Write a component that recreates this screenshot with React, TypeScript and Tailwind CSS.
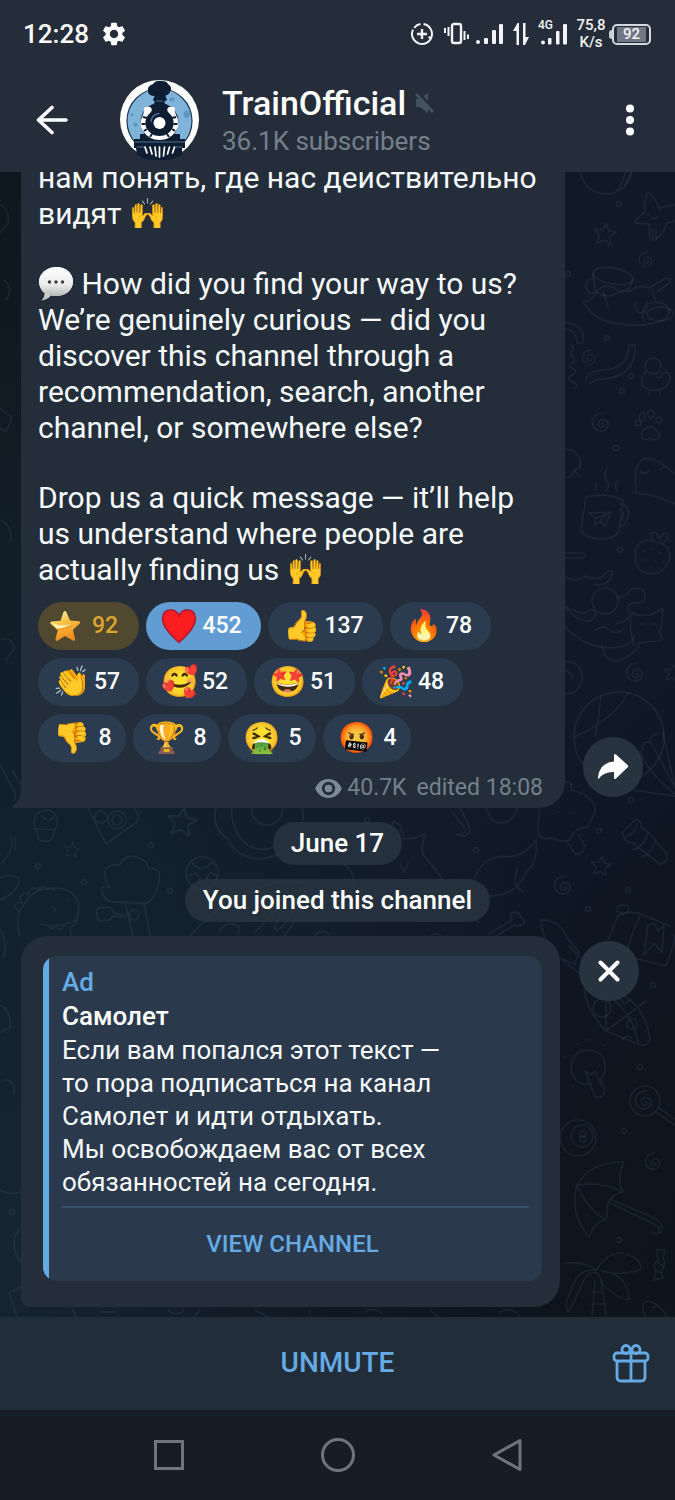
import React from "react";

/* ---------- wallpaper ---------- */

function Spiral({ x, y, s = 1 }: { x: number; y: number; s?: number }) {
  return (
    <path
      transform={`translate(${x} ${y}) scale(${s})`}
      d="M0 1c2-1 3 2 1 3-3 1-6-2-4-5 2-4 8-3 9 1 1 5-3 9-8 8-6-1-9-7-7-12 2-4 6-6 10-6"
    />
  );
}

function Star({ x, y, s = 1 }: { x: number; y: number; s?: number }) {
  return (
    <path
      transform={`translate(${x} ${y}) rotate(8) scale(${s})`}
      d="M0-11 3-4 11-3 5 2 7 10 0 6-7 10-5 2-11-3-3-4Z"
    />
  );
}

const dots: [number, number][] = [
  [619, 204], [607, 338], [631, 376], [622, 391], [616, 448], [620, 550], [631, 800], [599, 831],
  [476, 850], [628, 890], [588, 909], [367, 820], [151, 845], [38, 866], [84, 882], [170, 891],
  [640, 1067], [624, 1131], [619, 1240], [653, 985], [12, 1212], [568, 274],
];

function Wallpaper() {
  return (
    <svg
      aria-hidden="true"
      className="absolute inset-0 size-full"
      viewBox="0 172 675 1145"
      preserveAspectRatio="xMidYMid slice"
      fill="none"
      stroke="#7d98b3"
      strokeOpacity="0.11"
      strokeWidth="1.6"
      strokeLinecap="round"
      strokeLinejoin="round"
    >
      {dots.map(([x, y], i) => <circle key={i} cx={x} cy={y} r="2.5" />)}
      <Spiral x={647} y={260} s={0.8} />
      <Spiral x={590} y={358} s={0.8} />
      <Spiral x={602} y={423} />
      <Spiral x={636} y={673} />
      <Spiral x={564} y={886} />
      <Spiral x={654} y={1162} s={0.9} />
      <Star x={605} y={234} />
      <Star x={182} y={822} s={1.3} />
      <Star x={72} y={850} s={0.7} />
      <Star x={601} y={866} s={0.9} />
      <Star x={673} y={673} s={0.8} />
      {/* beach ball and starfish */}
      <circle cx="606" cy="168" r="26" />
      <path d="M625 172q-1 10-8 18M631 172q-2 8-7 13" />
      <path d="M648 193q4-1 11 15 8-2 20-4v16q-8 2-12 3-4 12-12 17-4 1-5-3l-1-13-14-1q-1-4 10-11-1-14 3-19Z" />
      <path d="M653 229v9M656 229v9M648 214h1M660 210h1M651 218q4 2 7-2" />
      {/* cup and fish */}
      <ellipse cx="613" cy="276" rx="20" ry="8" transform="rotate(10 613 276)" />
      <path d="M593 273l2 17q5 6 15 6l20-8 3-9M595 278q-9 0-9 8t9 7" />
      <path d="M583 302q10-1 14-11 7-8 17-3 10 8 23-1 6-2 12 1l17-10q6 1 3 5l-12 9M583 302q12 20 38 22 25 4 45-5 6-8 0-14-10-6-20 0-6 7-2 16M652 290l4 12M635 302q0 11 6 11t6-11M603 292l5 15" />
      <ellipse cx="660" cy="314" rx="13" ry="7" />
      {/* ribbons */}
      <path d="M565 323q20 0 18 20h-6q0-12-12-14" />
      <path d="M629 345h6q1 32-32 34-8 0-12 4-7 0-5-5 4-7 18-8 25-2 25-25Z" />
      <path d="M571 345q4 3 1 6t1 6-1 6 1 6-1 6 1 7 1 6" />
      {/* duckling */}
      <circle cx="653" cy="366" r="8" />
      <path d="M646 372q-7 6-3 14 8 7 19 3 9-4 8-13-2-6-8-2-1 6-5 3M649 392v3M660 392v3" />
      {/* paw */}
      <path d="M642 437q-1-7 4-9 8-4 12 5 4 4-2 7-4 0-6-2-6 4-8-1Z" />
      <circle cx="638" cy="423" r="3" /><ellipse cx="642" cy="417" rx="3" ry="4" />
      <ellipse cx="651" cy="414" rx="3" ry="4" /><circle cx="659" cy="420" r="3" />
      {/* hat and mug */}
      <path d="M565 449q12 0 15 12 2 8-6 9-2 8-8 8M574 470l6 7" />
      <path d="M636 490q-4-30 12-32 12 2 28 17M632 492q20 2 44 12M640 471q4 5 9 0M660 470l5-4" />
      <path d="M586 497q20-5 37 3l-4 31q-5 8-17 8-16 0-21-9ZM620 504q9 0 8 11-1 11-9 12M620 510q4 1 3 7-1 4-4 5" />
      <path d="M589 513l22-1-6 14-5-5-5 4 0-7ZM595 518l12-4-7 7M607 468q-4 8 0 13t-2 10M618 480q-4 6-1 11M596 482v8" />
      {/* strawberry */}
      <path d="M636 548q6-10 18-7 15 3 16 15-2 16-19 18-19-2-15-26ZM654 541q-6-9-1-9 5 0 6 7 6-9 9-4 1 4-5 8" />
      <path d="M644 551h1M652 549h1M660 553h1M646 560h1M655 560h1M663 563h1M650 568h1M658 568h1" />
      {/* hammock cat */}
      <circle cx="605" cy="601" r="13" />
      <path d="M565 576q12 8 20 0 14 6 20-2 8-7 7 1-4 12-18 9M565 553h18q4 2 0 5h-18M565 606q20 12 26 3 10 4-1 12-12 2-25-14M565 626q18 22 48 22 20-3 21-12M617 598q10-2 14-9 10-3 14 4 2 8-5 10-14-2-11 8 0 12-12 12" />
      <path d="M632 612l4 3q10 0 15 0l12-7-1 10q1 8-3 14 6 8-1 9-14 0-24 4-6-18-2-33ZM602 645q2 16 15 16 14-4 22-15M640 624h4M652 624h4M596 630q8-6 14 0t14-2" />
      {/* parachute */}
      <circle cx="619" cy="737" r="45" />
      <path d="M601 695q-2 22-6 42M628 692q-10 24-53 45M643 750q-2-8 6-8 2-8 9-8M640 751q6 20 35 43M651 742l24 46M663 733l12 55M632 790l43 6M565 662q16-2 17 15 0 16-17 17M565 670q6 2 7 8" />
      {/* ice cream */}
      <path d="M565 782q8-2 6 8 25 6 24 22-5 12-9 16-12-1-16 12-8 3-18-2-16 4-14-12l2-28M566 840l10 15q8-2 9-9l-7-12M558 812h1M575 813h1" />
      {/* torch */}
      <path d="M622 833l14-14q6 2 5 8l8 6 18 21q2 8-7 10l-22-17-4-4q-8 1-12-10ZM626 836q9-2 11-12M633 850q10-2 15-17M642 857q8-3 13-14" />
      {/* acorn, camera */}
      <path d="M35 829q-3-13 6-18 12-4 16 8 1 6-2 11ZM36 829l3 11q10 3 13-1l3-10M42 816l4 4M50 820l4-3" />
      <path d="M88 808l18 36 28-20q6-3 4-10l-4-6" />
      <circle cx="101" cy="817" r="6" /><circle cx="117" cy="820" r="9" /><circle cx="117" cy="820" r="5" />
      {/* cauliflower tree */}
      <path d="M102 892q-3-7 8-5-8-10-4-18 5-6 14-4 6-13 19-7 8 2 9 10 16-1 10 17-6 22-19 18l-18-1q-16 2-19-10ZM125 903l8 33M144 903l6 33" />
      <circle cx="134" cy="915" r="5" />
      <path d="M126 916l-12-3q-3-8-9-5-10-2-8 6-1 9 9 6 4 2 6-4l12 1" />
      {/* football, penguin, snow cone */}
      <circle cx="202" cy="873" r="16" />
      <path d="M192 862q8 12 20 0M187 876l10-3 4 10M217 876l-7-4-5 10" />
      <path d="M216 808q-5 20 12 31 8 18 30 20 28-2 40-24 8-16 4-27M252 808q0 16 15 17 14-1 16-17M232 808q-2 20 14 36 14 10 30 2" />
      <path d="M190 936q34-40 88-54 18-2 28 2-2 28-22 52M220 932q4-10 14-8 8 2 4 10M255 932l20-20q8-2 4 8-8 8-2 10 12-6 18-26" />
      <path d="M315 936q6-8 14-2" />
      {/* dinosaur */}
      <path d="M20 936q-6-18 4-32 12-20 40-15 18 6 14 26-2 12-8 12l1 9M40 924q18 5 36-4M48 925l4 4 4-3 4 4 4-4M20 912q-6-3-4-8 2-3 6-1-4-7 1-9 4-1 6 1-1-6 4-7 4 0 5 3 2-5 6-4l3 3q4-4 8 1" />
      <path d="M53 907l3 4M68 899l1 2" />
      <path d="M0 878q12-5 18 0 3 6-6 15-8 6-12 7M10 836q6 12-8 27M15 838v12M0 930q8 10 4 28" />
      {/* cat and comet */}
      <path d="M378 851l10-12 5-18 7 4 4 14q10 0 21-5-4 14-2 20l30 38q6 18 26 30M400 864l4 8 4-9" />
      <path d="M340 862q16 8 14 26M452 812l14 18q-2 6-10 4M460 808q8 14 10 22-2 10-14 4M487 808q2 14 15 15 12-2 15-15" />
      <path d="M473 884q6-26 30-28 18 4 33-16 2 24-10 32-8 24-38 24M518 868q-8 16 5 24" />
      <path d="M488 934l24-14q-4-8 4-8 4 2 5 6 6 2 2 6-6 4-9 1l-18 11M430 936q6-4 12 0" />
      {/* rocket, jar */}
      <path d="M541 920q20 0 26 18l12 14-4 12-15-6q-16-10-19-38ZM560 958l20 16M568 946l16 14" />
      <path d="M608 940l10-24q12-6 22-2l30 12M640 916q-10 20-14 40l40 10q8-20 9-32M648 925l-4 30 10-12 8 10 2-28-6 6-4-8Z" />
      <ellipse cx="623" cy="909" rx="6" ry="4" />
      {/* pizza */}
      <path d="M584 990q14-6 30 0 32 14 36 50-4 8-12 4l-32-13q-18-18-22-41ZM606 1031V994M606 1031l40-30M604 994q26 12 34 48" />
      <circle cx="602" cy="1008" r="9" /><circle cx="632" cy="1024" r="5" /><path d="M622 1040q4-6 10-2M620 998l4 6 6-4" />
      {/* light bulb */}
      <path d="M592 1084q-20 2-21-17 1-16 17-17 17 1 17 17 0 8-4 12l4 12q-2 8-10 6l-10-26 6 4 4-4 6 14" />
      <path d="M577 1044h1M590 1040h1M603 1045h1M565 1057h1M572 1086h1" />
      {/* lollipop and button */}
      <circle cx="645" cy="1101" r="15" /><Spiral x={645} y={1101} />
      <path d="M656 1112l20 14M659 1108l17 12" />
      <circle cx="578" cy="1138" r="18" /><circle cx="582" cy="1136" r="11" /><circle cx="583" cy="1134" r="3" /><circle cx="583" cy="1139" r="3" />
      {/* umbrella */}
      <path d="M589 1237q-20-24-12-52 14-24 47-23-8 16-1 30-10 2-15 10 0 10-2 18-12 2-17 17ZM577 1185q24-4 46 7M577 1185q10 24 29 35M608 1202l46 22q8 4 4 9-4 2-6-2M610 1199l46 20q10 8 4 14" />
      {/* sweet and palm */}
      <path d="M657 1250l8 0-2 8q4 8-2 12l2 8-9 2 2-8q-4-8 2-12ZM657 1262l6 4M656 1270l5 3" />
      <path d="M565 1263q18-2 32 7 8-16 24-17 20 4 20 16-18 8-40 2 26 2 28 28-4 4-26-14-1-6-6-12-4-3-12 5-8 18-16 34-6-4 2-22 6-22 26-20M592 1317l3-36M606 1317q-2-24-6-40M592 1292h11M591 1304h14" />
      <path d="M645 1317q-6-16 4-16 12 4 18 16M652 1308l6-3" />
      {/* left edge */}
      <path d="M0 205q10 4 8 18l-8 10M4 280q10 8 2 20M0 408l12 10-6 14-6-4M0 520q14 6 10 22M2 640q10-4 12 8l-8 12M0 765l12 22q6 6 2 14M12 770l8 14M0 1005q12 6 10 22l-10 6M4 1080q12 0 10 14M20 1228q-12 14 0 34M9 1293l12-6M9 1293l8 24M0 1190q10 6 20 2" />
      <path d="M168 1310q10 8 16 0M200 1310l-6 7M255 1310l14 7M310 1310v7M365 1312q8-6 18 2M72 1308l4 9M100 1312h16M430 1310l8 7M500 1312q10-6 20 4" />
    </svg>
  );
}

/* ---------- status bar icons ---------- */

function StatusIcons() {
  return (
    <div className="flex items-center" role="img" aria-label="Data saver, vibrate, mobile signal, 4G, battery 92 percent">
      <svg width="24" height="24" viewBox="0 0 24 24" fill="none" stroke="#f1f3f5" strokeWidth="2">
        <path d="M13.500 2.100A10 10 0 1 1 3 7.600M4.200 5.800A10 10 0 0 1 10.500 2.100" />
        <path d="M21 16l-2.500-1" />
        <path d="M12 7v10M7 12h10" strokeWidth="2.400" />
      </svg>
      <svg className="ml-[10px]" width="26" height="24" viewBox="0 0 26 24" fill="none" stroke="#f1f3f5" strokeWidth="2">
        <rect x="8" y="2" width="9" height="19" rx="2" strokeWidth="2.400" />
        <path d="M1 6v5M4.500 5v9M20.500 9v9M24 12.500v4.500" />
      </svg>
      <svg className="ml-[6px]" width="28" height="24" viewBox="0 0 28 24" fill="#f1f3f5">
        <circle cx="2" cy="20" r="2" />
        <rect x="8" y="16" width="4" height="6" rx="1" />
        <rect x="16" y="8" width="4" height="14" rx="1" />
        <rect x="23" y="2" width="4" height="20" rx="1" />
      </svg>
      <svg className="ml-[8px]" width="18" height="24" viewBox="0 0 18 24" fill="#f1f3f5">
        <path d="M7 1v22H4.500V9H1L5.500 1ZM11 1v22h2l4-8h-3.500V1Z" />
      </svg>
      <svg className="ml-[8px] overflow-visible" width="30" height="32" viewBox="0 0 30 32" fill="#f1f3f5">
        <text x="0" y="11" fontSize="12" fontWeight="500" fontFamily="Roboto, sans-serif">4G</text>
        <circle cx="5" cy="24.500" r="2" />
        <rect x="10" y="20" width="3.500" height="6.500" rx="1" />
        <rect x="18" y="13" width="3.500" height="13.500" rx="1" />
        <rect x="25" y="6" width="4" height="20.500" rx="1" />
      </svg>
      <div className="ml-[7px] w-8 text-center text-[15px] leading-[17px] font-medium text-[#f1f3f5]">
        75,8<br />K/s
      </div>
      <div className="ml-[2px] flex items-center">
        <span className="h-[9px] w-[3px] rounded-l-sm bg-[#c9ced4]" />
        <span className="flex h-[21px] w-[39px] items-center rounded-[5px] border-2 border-[#d4d8dc] px-[3px]">
          <span className="flex-1 bg-[#717783] text-center text-[15px] leading-[15px] font-medium text-[#f1f3f5]">92</span>
        </span>
      </div>
    </div>
  );
}

function GearIcon() {
  return (
    <svg width="28" height="28" viewBox="0 0 24 24" fill="#fff" aria-hidden="true">
      <path d="M19.140 12.940c.04-.3.06-.61.06-.94 0-.32-.02-.64-.07-.94l2.030-1.580c.18-.14.23-.41.12-.61l-1.920-3.320c-.12-.22-.37-.29-.59-.22l-2.390.96c-.5-.38-1.030-.7-1.620-.94l-.36-2.540c-.04-.24-.24-.41-.48-.41h-3.840c-.24 0-.43.17-.47.41l-.36 2.540c-.59.24-1.130.57-1.620.94l-2.390-.96c-.22-.08-.47 0-.59.22L2.740 8.870c-.12.21-.08.47.12.61l2.030 1.580c-.05.3-.09.63-.09.94s.02.64.07.94l-2.030 1.580c-.18.14-.23.41-.12.61l1.920 3.320c.12.22.37.29.59.22l2.390-.96c.5.38 1.030.7 1.620.94l.36 2.540c.05.24.24.41.48.41h3.840c.24 0 .44-.17.47-.41l.36-2.540c.59-.24 1.130-.56 1.620-.94l2.390.96c.22.08.47 0 .59-.22l1.920-3.320c.12-.22.07-.47-.12-.61l-2.010-1.580zM12 15.600c-1.980 0-3.600-1.620-3.600-3.600s1.620-3.600 3.600-3.600 3.600 1.620 3.600 3.600-1.620 3.600-3.600 3.600z" />
    </svg>
  );
}

/* ---------- channel avatar ---------- */

function Avatar() {
  return (
    <svg width="80" height="80" viewBox="0 0 80 80" role="img" aria-label="TrainOfficial logo">
      <circle cx="39.500" cy="39.500" r="39.500" fill="#fff" />
      <circle cx="39.500" cy="41" r="32.500" fill="#7fb3d9" stroke="#20374f" strokeWidth="1.200" />
      <path d="M50 18q4-2 5 1-3 4-6 2ZM64 32q5-4 6 2 0 4-4 4-4-2-2-6ZM13 44q3-3 5 0 0 3-3 3ZM10 34q3-2 4 1-2 3-4-1Z" fill="#5f97c2" />
      <path d="M33 4q3-4 9-3 5 0 6 3 5 3 2 8-2 4-7 4-4 2-8 0-7 0-7-5-1-5 5-7Z" fill="#0f1d33" />
      <path d="M35 15h10l2 5-3 2 2 3-3 3v6H36v-6l-3-3 2-3-2-2Z" fill="#0f1d33" />
      <path d="M34 26h12M36 21h7" stroke="#4d7596" strokeWidth="1" />
      <path d="M20 54h40v5h5v9h-3v7l-9 4q-13 3-28 0l-8-4-1-7h-2v-9h6Z" fill="#0f1d33" />
      <circle cx="39.500" cy="42" r="19" fill="#0f1d33" />
      <path d="M24 28q2-2 6-1 3 2 1 5l-3 3q-4 6-2 12 4 9 13.500 9T53 47q2-6-2-12l-3-3q-2-3 1-5 4-1 6 1-1 3 1 7 5 9 0 16-6 9-16.500 9T23 51q-5-7 0-16 2-4 1-7Z" fill="#fff" />
      <path d="M23 37l4 1M21.500 44h4M24 51l3-2M30 57l2-3M56 37l-4 1M57.500 44h-4M55 51l-3-2M49 57l-2-3" stroke="#0f1d33" strokeWidth="2" />
      <circle cx="39.500" cy="42" r="11" fill="#0f1d33" />
      <path d="M31 42a8.500 8.500 0 0 1 8.500-8.500" fill="none" stroke="#4d7596" strokeWidth="1.500" />
      <circle cx="39.500" cy="43" r="6" fill="#fff" />
      <path d="M15 62h50M17 67h8M55 67h7" stroke="#4d7596" strokeWidth="1" />
      <path d="M25 67l2 6M30 67l2 7M35 67l1 9M39.500 67v10M44.500 67l-1 9M49.500 67l-2 7M54.500 67l-2 6" stroke="#fff" strokeWidth="1.700" strokeLinecap="round" />
    </svg>
  );
}

/* ---------- emoji drawings ---------- */

function StarEmoji() {
  return (
    <svg width="32" height="32" viewBox="0 0 32 32" aria-hidden="true">
      <defs>
        <linearGradient id="star" x1="0" y1="0" x2="0.400" y2="1">
          <stop offset="0" stopColor="#fff7d2" />
          <stop offset="0.450" stopColor="#fbc545" />
          <stop offset="1" stopColor="#f28c1e" />
        </linearGradient>
      </defs>
      <path d="M14.500 2q1.500-2 2.800 0l3.700 8.500 9 .8q2 .7.500 2.500l-6.500 6 2 9q0 2.500-2.200 1.700L16 26l-7.500 4.700q-2 .7-2-1.700l2.300-8.700-7-6.200q-1.500-2 .7-2.700l9-.7Z" fill="url(#star)" />
      <path d="M8.800 20.300Q18 20 25 14.500q-8 3-17 2l-2.500.8Z" fill="#f09a2a" />
      <path d="M2 12.500q10 4.500 20 1.500-7 5-14.500 4.500Z" fill="#fff0b8" />
    </svg>
  );
}

function HeartEmoji() {
  return (
    <svg width="36" height="36" viewBox="0 0 36 36" aria-hidden="true">
      <path d="M18 34.500Q1.500 20 1.500 10.500 2 2 9.500 2q6 0 8.500 5.500Q20.500 2 26.500 2 34 2 34.500 10.500 34.500 20 18 34.500Z" fill="#fb1d20" stroke="#a91d33" strokeWidth="1.600" />
    </svg>
  );
}

function SpeechEmoji() {
  return (
    <svg className="inline-block align-[-8px]" width="36" height="36" viewBox="0 0 36 36" role="img" aria-label="💬">
      <defs>
        <linearGradient id="speech" x1="0" y1="0" x2="0" y2="1">
          <stop offset="0" stopColor="#ffffff" />
          <stop offset="0.600" stopColor="#ececec" />
          <stop offset="1" stopColor="#b9babb" />
        </linearGradient>
      </defs>
      <path d="M18 1C28 1 35 7 35 15.500S28 30 18 30q-3 0-5-.6Q9 34 3.500 34.500q3-3 3.300-7Q1 23 1 15.500 1 7 18 1Z" fill="url(#speech)" />
      <ellipse cx="18" cy="15.500" rx="17" ry="14.500" fill="url(#speech)" />
      <g fill="#3c3c3e"><circle cx="11.500" cy="16" r="1.700" /><circle cx="18" cy="16" r="1.700" /><circle cx="24.500" cy="16" r="1.700" /></g>
    </svg>
  );
}

/* ---------- reactions ---------- */

type Reaction = { icon: React.ReactNode; label: string; count: number; tone?: "star" | "chosen" };

const reactions: Reaction[] = [
  { icon: <StarEmoji />, label: "Star", count: 92, tone: "star" },
  { icon: <HeartEmoji />, label: "Heart", count: 452, tone: "chosen" },
  { icon: "👍", label: "Thumbs up", count: 137 },
  { icon: "🔥", label: "Fire", count: 78 },
  { icon: "👏", label: "Clap", count: 57 },
  { icon: "🥰", label: "Adore", count: 52 },
  { icon: "🤩", label: "Star-struck", count: 51 },
  { icon: "🎉", label: "Party", count: 48 },
  { icon: "👎", label: "Thumbs down", count: 8 },
  { icon: "🏆", label: "Trophy", count: 8 },
  { icon: "🤮", label: "Vomit", count: 5 },
  { icon: "🤬", label: "Rage", count: 4 },
];

const widthByDigits: Record<number, string> = {
  1: "w-[88px] pl-[14px] pr-[6px]",
  2: "w-[101px] pl-[14px] pr-[15px]",
  3: "w-[115px] pl-[14px] pr-[15px]",
};

function ReactionChip({ r }: { r: Reaction }) {
  const tone =
    r.tone === "star"
      ? "w-[101px] pl-2 pr-[13px] bg-[#50482f] text-[#dba52f]"
      : r.tone === "chosen"
        ? `${widthByDigits[3]} bg-[#619cd2] text-white`
        : `${widthByDigits[String(r.count).length]} bg-[#2c3c50] text-white`;
  return (
    <button type="button" aria-label={`${r.label} ${r.count}`} className={`flex h-12 items-center rounded-full ${tone}`}>
      <span className="flex w-[38px] justify-center text-[30px] leading-9">{r.icon}</span>
      <span className="flex-1 text-center text-[23px] font-medium">{r.count}</span>
    </button>
  );
}

/* ---------- page ---------- */

function Header() {
  return (
    <header className="bg-[#262d3a]">
      <div className="flex h-[68px] items-center justify-between pr-6 pl-[23px]">
        <div className="flex items-center gap-[11px] text-[26px] font-medium">
          <time>12:28</time>
          <GearIcon />
        </div>
        <StatusIcons />
      </div>
      <div className="flex h-[104px] items-center pr-[15px] pl-[22px]">
        <button type="button" aria-label="Back" className="flex size-[60px] items-center justify-center">
          <svg width="32" height="30" viewBox="0 0 32 30" fill="none" stroke="#fff" strokeWidth="3.600" strokeLinecap="round" strokeLinejoin="round">
            <path d="M30 15H2.500M16 2.500 2.500 15 16 27.500" />
          </svg>
        </button>
        <div className="ml-[38px]"><Avatar /></div>
        <div className="ml-[22px] flex-1 pt-[4px]">
          <div className="flex items-center gap-[9px]">
            <h1 className="text-[34px] leading-[38px] font-medium">TrainOfficial</h1>
            <svg width="20" height="22" viewBox="0 0 20 22" role="img" aria-label="Muted">
              <path d="M1 7h4l8-6v20l-8-6H1Z" fill="#43525f" />
              <path d="M3 0l16 18" stroke="#262d3a" strokeWidth="3" />
              <path d="M1 2l17 18" stroke="#43525f" strokeWidth="2.600" />
            </svg>
          </div>
          <p className="text-[26px] leading-[38px] text-[#74808c]">36.1K subscribers</p>
        </div>
        <button type="button" aria-label="More options" className="flex h-[60px] w-[60px] items-center justify-center">
          <svg width="10" height="32" viewBox="0 0 10 32" fill="#fff">
            <circle cx="5" cy="4.500" r="4" /><circle cx="5" cy="16" r="4" /><circle cx="5" cy="27.500" r="4" />
          </svg>
        </button>
      </div>
    </header>
  );
}

function Tail() {
  return (
    <svg aria-hidden="true" className="absolute bottom-0 -left-[9px]" width="10" height="18" viewBox="0 0 10 18" fill="#232e3a">
      <path d="M10 0v18H1q-2-1 0-2 7-5 8-16Z" />
    </svg>
  );
}

function Post() {
  return (
    <div className="flex items-end gap-[18px] pr-8 pl-[21px]">
      <article className="relative flex-1 rounded-br-[26px] bg-[#232e3a] pr-[22px] pb-1 pl-[17px]">
        <Tail />
        <div className="text-[30px] leading-9 text-[#f7f9fb]">
          <p>нам понять, где нас действительно<br />видят 🙌</p>
          <div className="mt-[34px]">
            <p className="h-9"><SpeechEmoji /> How did you find your way to us?</p>
            <p>We’re genuinely curious — did you<br />discover this channel through a<br />recommendation, search, another<br />channel, or somewhere else?</p>
          </div>
          <p className="mt-[34px]">Drop us a quick message — it’ll help<br />us understand where people are<br />actually finding us 🙌</p>
        </div>
        <div className="mt-[14px] flex flex-wrap gap-x-[7px] gap-y-2">
          {reactions.map((r) => <ReactionChip key={r.label} r={r} />)}
        </div>
        <div className="mt-[11px] flex h-[31px] items-center justify-end text-[23px] text-[#74808c]">
          <svg className="mr-[5px]" width="27" height="19" viewBox="0 0 28 20" role="img" aria-label="Views">
            <path fillRule="evenodd" fill="#7c8a97" d="M14 0C7.500 0 2.500 4 0 10c2.500 6 7.500 10 14 10s11.500-4 14-10C25.500 4 20.500 0 14 0Zm0 3a7 7 0 1 1 0 14 7 7 0 0 1 0-14Zm0 3a4 4 0 1 0 0 8 4 4 0 0 0 0-8Z" />
          </svg>
          <span>40.7K</span>
          <span className="ml-[10px]">edited 18:08</span>
        </div>
      </article>
      <button type="button" aria-label="Share" className="mb-[11px] flex size-[60px] items-center justify-center rounded-full bg-[#2b3844]/85">
        <svg width="32" height="28" viewBox="0 0 32 28" fill="#fff">
          <path d="M17 2.500q0-2.500 2-1L30.500 12q1.500 1.300 0 2.600L19 25.500q-2 1.500-2-1V19Q7 18.500 2 25.500q-1.500 1-1-1Q2.500 9.500 17 8.500Z" />
        </svg>
      </button>
    </div>
  );
}

function Pill({ children }: { children: React.ReactNode }) {
  return <span className="flex h-[43px] items-center rounded-full bg-[#293642]/80 px-[18px]">{children}</span>;
}

function Ad() {
  return (
    <div className="mt-[14px] flex gap-[19px] pr-9 pl-[21px]">
      <article className="relative flex-1 rounded-[26px] rounded-bl-lg bg-[#232e3a] pt-5 pr-[18px] pb-[26px] pl-[22px]">
        <div className="overflow-hidden rounded-[14px] bg-[#2a3a4c]">
          <div className="border-l-[6px] border-[#65aae3] pt-[9px] pr-[13px] pl-[13px] text-[26px]">
            <p className="leading-[34px] font-medium text-[#65aae3]">Ad</p>
            <h2 className="leading-[35px] font-medium">Самолет</h2>
            <p className="leading-[33px] text-[#f7f9fb]">
              Если вам попался этот текст —<br />то пора подписаться на канал<br />Самолет и идти отдыхать.<br />Мы освобождаем вас от всех<br />обязанностей на сегодня.
            </p>
            <hr className="mt-[7px] h-[2px] border-0 bg-[#34506b]" />
            <a href="#channel" className="flex h-[73px] items-center justify-center pr-[6px] pb-[2px] text-[24px] font-medium text-[#65aae3]">
              VIEW CHANNEL
            </a>
          </div>
        </div>
      </article>
      <button type="button" aria-label="Close ad" className="mt-[5px] flex size-[60px] items-center justify-center rounded-full bg-[#2b3844]/85">
        <svg width="22" height="22" viewBox="0 0 22 22" stroke="#fff" strokeWidth="4" strokeLinecap="round">
          <path d="M2.500 2.500l17 17M19.500 2.500l-17 17" />
        </svg>
      </button>
    </div>
  );
}

export default function App() {
  return (
    <div className="flex h-screen flex-col bg-[#131d29] font-['Roboto','Liberation_Sans',sans-serif] text-white">
      <Header />
      <main className="relative isolate flex min-h-0 flex-1 flex-col justify-end overflow-hidden bg-[linear-gradient(180deg,#0f171f_0%,#12202b_50%,#162532_100%)] pb-[10px]">
        <div className="absolute inset-0 -z-10 bg-[linear-gradient(90deg,transparent_20%,#111827_85%)]" />
        <div className="absolute inset-0 -z-10 bg-[linear-gradient(135deg,transparent_60%,#0d141c_95%)]" />
        <div className="absolute inset-0 -z-10"><Wallpaper /></div>
        <Post />
        <div className="mt-[14px] flex flex-col items-center gap-[14px] text-[26px] font-medium">
          <Pill>June 17</Pill>
          <Pill>You joined this channel</Pill>
        </div>
        <Ad />
      </main>
      <footer className="relative flex h-[93px] items-center justify-center bg-[#222d3a]">
        <button type="button" className="px-6 pb-[2px] text-[28px] font-medium text-[#65aae3]">UNMUTE</button>
        <button type="button" aria-label="Send a gift" className="absolute right-[18px] flex size-[52px] items-center justify-center">
          <svg width="38" height="40" viewBox="0 0 38 40" fill="none" stroke="#65aae3" strokeWidth="2.800" strokeLinejoin="round">
            <rect x="2" y="9" width="34" height="8" rx="3" />
            <path d="M5 17v16q0 4 4 4h20q4 0 4-4V17M19 9v28" />
            <circle cx="14" cy="5.500" r="4" /><circle cx="24" cy="5.500" r="4" />
          </svg>
        </button>
      </footer>
      <nav aria-label="System navigation" className="grid h-[90px] grid-cols-3 items-center justify-items-center bg-[#171d26] px-[84px]">
        <button type="button" aria-label="Recent apps" className="flex size-12 items-center justify-center">
          <svg width="30" height="30" viewBox="0 0 30 30" fill="none" stroke="#6f757e" strokeWidth="3"><rect x="1.500" y="1.500" width="27" height="27" /></svg>
        </button>
        <button type="button" aria-label="Home" className="flex size-12 items-center justify-center">
          <svg width="34" height="34" viewBox="0 0 34 34" fill="none" stroke="#6f757e" strokeWidth="3"><circle cx="17" cy="17" r="15.500" /></svg>
        </button>
        <button type="button" aria-label="Back" className="flex size-12 items-center justify-center">
          <svg width="32" height="34" viewBox="0 0 32 34" fill="none" stroke="#6f757e" strokeWidth="3" strokeLinejoin="round"><path d="M29 2.500v29L3 17Z" /></svg>
        </button>
      </nav>
    </div>
  );
}
